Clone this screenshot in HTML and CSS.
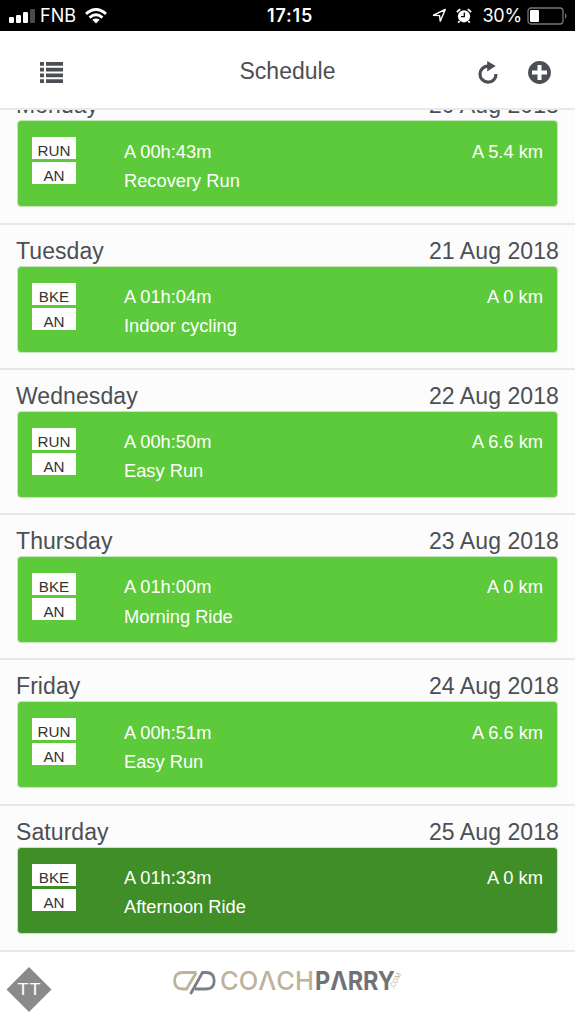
FILE: index.html
```
<!DOCTYPE html>
<html lang="en">
<head>
    <meta charset="utf-8">
    <title>Schedule</title>
    <link rel="stylesheet" href="styles.css">
</head>
<body>
    <div class="status">
        <div class="status-left">
            <svg width="26" height="16" viewBox="0 0 26 16" fill="#fff">
                <rect x="0" y="9" width="5" height="6" rx="1.2"/>
                <rect x="7" y="7" width="5" height="8" rx="1.2"/>
                <rect x="14" y="4" width="5" height="11" rx="1.2"/>
                <rect x="21" y="1" width="5" height="14" rx="1.2" fill="#4a4a4a"/>
            </svg>
            <span class="carrier">FNB</span>
            <svg class="wifi" width="22" height="16" viewBox="0 0 22 16" fill="none" stroke="#fff" stroke-width="2.9">
                <path d="M1 5.8 Q11 -2.8 21 5.8"/>
                <path d="M4.6 9.6 Q11 4 17.4 9.6"/>
                <path d="M11 15.4 L7.3 11.8 Q11 9 14.7 11.8Z" fill="#fff" stroke="none"/>
            </svg>
        </div>
        <span class="time">17:15</span>
        <div class="status-right">
            <svg width="15" height="15" viewBox="0 0 15 15" fill="none" stroke="#fff" stroke-width="1.4" stroke-linejoin="round">
                <path d="M1.5 7.2 L13.3 1.5 L8.2 13.2 L7.6 7.6Z"/>
            </svg>
            <svg class="alarm" width="16" height="16" viewBox="0 0 16 16">
                <circle cx="8" cy="8.3" r="6.1" fill="#fff"/>
                <path d="M1 4.2 A9 9 0 0 1 4.3 1.3 M11.7 1.3 A9 9 0 0 1 15 4.2 M3.6 13 L2.3 14.6 M12.4 13 L13.7 14.6" stroke="#fff" stroke-width="1.7" fill="none"/>
                <path d="M8.3 4.5 V8.7 H5" stroke="#000" stroke-width="1.3" fill="none"/>
            </svg>
            <span class="percent">30%</span>
            <svg width="41" height="18" viewBox="0 0 41 18">
                <rect x="1" y="1" width="35" height="16" rx="3" fill="none" stroke="#777" stroke-width="1.3"/>
                <rect x="3" y="3" width="9" height="12" rx="1" fill="#fff"/>
                <path d="M38 6 Q41 9 38 12Z" fill="#777"/>
            </svg>
        </div>
    </div>

    <div class="header">
        <svg class="menu" width="23" height="21" viewBox="0 0 23 21" fill="#4b4f54">
            <path d="M0 0h4v3.8H0z M6 0h17v3.8H6z M0 5.8h4v3.6H0z M6 5.8h17v3.6H6z M0 11.4h4v3.8H0z M6 11.4h17v3.8H6z M0 17.2h4V21H0z M6 17.2h17V21H6z"/>
        </svg>
        <h1 class="title">Schedule</h1>
        <div class="actions">
            <svg width="20" height="24" viewBox="0 0 20 24">
                <path d="M10.5 5.2 A8 8 0 1 0 18 13" fill="none" stroke="#4b4f54" stroke-width="3.2"/>
                <path d="M9.2 0 L17.7 5 L9.2 10.4Z" fill="#4b4f54"/>
            </svg>
            <svg width="23" height="23" viewBox="0 0 23 23">
                <circle cx="11.5" cy="11.5" r="11.4" fill="#4b4f54"/>
                <path d="M11.5 4v15 M4 11.5h15" stroke="#fff" stroke-width="4"/>
            </svg>
        </div>
    </div>

    <div class="list">
        <div class="day">
            <div class="day-head"><span>Monday</span><span>20 Aug 2018</span></div>
            <div class="card">
                <div class="tags"><span class="tag">RUN</span><span class="tag">AN</span></div>
                <div class="info"><span>A 00h:43m</span><span>Recovery Run</span></div>
                <span class="distance">A 5.4 km</span>
            </div>
        </div>
        <div class="day">
            <div class="day-head"><span>Tuesday</span><span>21 Aug 2018</span></div>
            <div class="card">
                <div class="tags"><span class="tag">BKE</span><span class="tag">AN</span></div>
                <div class="info"><span>A 01h:04m</span><span>Indoor cycling</span></div>
                <span class="distance">A 0 km</span>
            </div>
        </div>
        <div class="day">
            <div class="day-head"><span>Wednesday</span><span>22 Aug 2018</span></div>
            <div class="card">
                <div class="tags"><span class="tag">RUN</span><span class="tag">AN</span></div>
                <div class="info"><span>A 00h:50m</span><span>Easy Run</span></div>
                <span class="distance">A 6.6 km</span>
            </div>
        </div>
        <div class="day">
            <div class="day-head"><span>Thursday</span><span>23 Aug 2018</span></div>
            <div class="card">
                <div class="tags"><span class="tag">BKE</span><span class="tag">AN</span></div>
                <div class="info"><span>A 01h:00m</span><span>Morning Ride</span></div>
                <span class="distance">A 0 km</span>
            </div>
        </div>
        <div class="day">
            <div class="day-head"><span>Friday</span><span>24 Aug 2018</span></div>
            <div class="card">
                <div class="tags"><span class="tag">RUN</span><span class="tag">AN</span></div>
                <div class="info"><span>A 00h:51m</span><span>Easy Run</span></div>
                <span class="distance">A 6.6 km</span>
            </div>
        </div>
        <div class="day">
            <div class="day-head"><span>Saturday</span><span>25 Aug 2018</span></div>
            <div class="card card-dark">
                <div class="tags"><span class="tag">BKE</span><span class="tag">AN</span></div>
                <div class="info"><span>A 01h:33m</span><span>Afternoon Ride</span></div>
                <span class="distance">A 0 km</span>
            </div>
        </div>
    </div>

    <div class="footer">
        <svg class="badge" width="46" height="46" viewBox="0 0 46 46">
            <path d="M23 0 L45.5 22.5 L23 45 L0.5 22.5Z" fill="#8a8a8a"/>
            <text x="11" y="28" textLength="24" lengthAdjust="spacingAndGlyphs" class="badge-text">TT</text>
        </svg>
        <svg class="logo" width="232" height="30" viewBox="0 0 232 30">
            <g fill="none" stroke-width="2.8">
                <path d="M23.5 5.5 H10 Q1.6 5.5 1.6 13.8 Q1.6 22 10 22 H13.5 L23 6" stroke="#beb29a"/>
                <path d="M17.5 27 L29.5 5.5 H33 Q41.2 5.5 41.2 13.8 Q41.2 22 33 22 H22" stroke="#7b7e84"/>
            </g>
            <text x="47" y="22.8" textLength="94" lengthAdjust="spacingAndGlyphs" class="logo-coach">COΛCH</text>
            <text x="142" y="22.8" textLength="80" lengthAdjust="spacingAndGlyphs" class="logo-parry">PΛRRY</text>
            <text transform="translate(220.5 22.5) rotate(-62)" textLength="17" lengthAdjust="spacingAndGlyphs" class="logo-com">.COM</text>
        </svg>
    </div>
</body>
</html>
```
FILE: styles.css
```
* {
    box-sizing: border-box;
}
body {
    margin: 0;
    height: 1024px;
    display: flex;
    flex-direction: column;
    overflow: hidden;
    background: #fff;
    color: #4b4f54;
    font-family: "Liberation Sans", Arial, sans-serif;
}
svg {
    display: block;
    flex: none;
}

/* phone status bar */
.status {
    height: 31px;
    flex: none;
    display: grid;
    grid-template-columns: 1fr auto 1fr;
    align-items: center;
    padding: 0 0 0 9px;
    background: #000;
    color: #fff;
    font-family: Inter, "Liberation Sans", sans-serif;
    font-size: 18px;
}
.status-left, .status-right {
    display: flex;
    align-items: center;
}
.status-right {
    justify-content: flex-end;
    padding-right: 7px;
}
.carrier {
    margin: 0 9px 0 5px;
}
.time {
    padding-right: 4px;
    font-weight: 600;
    letter-spacing: 0.8px;
}
.alarm {
    margin: 0 10px 0 9px;
}
.percent {
    margin-right: 5px;
    letter-spacing: -0.2px;
}

.header {
    height: 79px;
    flex: none;
    display: grid;
    grid-template-columns: 1fr auto 1fr;
    align-items: center;
    padding: 6px 24px 0 40px;
    border-bottom: 2px solid #e9e9e9;
}
.title {
    margin: -2px 0 0;
    padding-right: 16px;
    font-size: 23px;
    font-weight: normal;
}
.actions {
    display: flex;
    align-items: center;
    justify-content: flex-end;
    gap: 30px;
}

/* the list is scrolled to its end */
.list {
    flex: 1;
    min-height: 0;
    display: flex;
    flex-direction: column;
    justify-content: flex-end;
    overflow: hidden;
    padding-bottom: 1px;
    background: #fcfcfc;
}
.day {
    height: 145.3px;
    flex: none;
    padding: 12px 17px 0;
    border-top: 2px solid #e6e6e6;
}
.day-head {
    display: flex;
    justify-content: space-between;
    margin: 0 -1px;
    font-size: 23px;
    line-height: 28px;
    padding-bottom: 1px;
    letter-spacing: 0.08px;
}
.card {
    display: flex;
    height: 87px;
    padding: 16px 14px 0;
    border: 1px solid #c8e6bd;
    border-radius: 4px;
    background: #5dca3b;
    color: #fff;
    font-size: 18.3px;
    line-height: 29.3px;
}
.card-dark {
    background: #3f8e27;
}
.tags {
    width: 44px;
    display: flex;
    flex-direction: column;
    gap: 3px;
}
.tag {
    height: 22px;
    padding-top: 3px;
    background: #fff;
    color: #333;
    font-size: 15.2px;
    line-height: 21px;
    text-align: center;
}
.info {
    flex: 1;
    display: flex;
    flex-direction: column;
    margin: -0.7px 0 0 48px;
}
.distance {
    margin-top: -0.7px;
}

.footer {
    height: 74px;
    flex: none;
    display: flex;
    align-items: flex-start;
    border-top: 2px solid #e8e8e8;
}
.badge {
    margin: 15px 0 0 6px;
}
.badge-text {
    font-family: Inter, sans-serif;
    font-size: 16px;
    fill: #fff;
}
.logo {
    margin: 15px 0 0 121px;
}
.logo-coach {
    font: 500 25.5px Inter, "Open Sans", sans-serif;
    fill: #beb29a;
}
.logo-parry {
    font: 700 25.5px Inter, "Open Sans", sans-serif;
    fill: #707276;
}
.logo-com {
    font: 7px Inter, sans-serif;
    fill: #beb29a;
}
```
